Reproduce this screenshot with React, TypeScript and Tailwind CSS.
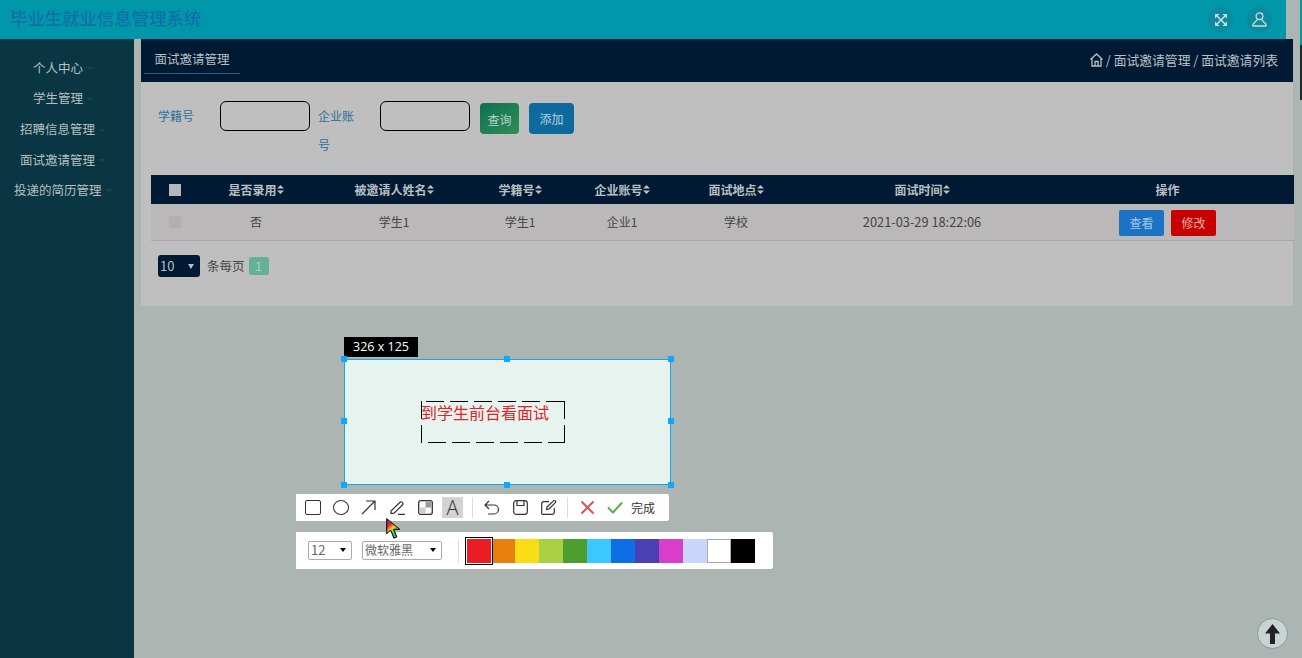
const font = "font-['Noto_Sans_CJK_SC','Liberation_Sans',sans-serif]";

const menu = [
  { label: "个人中心", pl: "pl-[33px]", h: "h-[30px]" },
  { label: "学生管理", pl: "pl-[33px]", h: "h-[31px]" },
  { label: "招聘信息管理", pl: "pl-[20px]", h: "h-[31px]" },
  { label: "面试邀请管理", pl: "pl-[20px]", h: "h-[30px]" },
  { label: "投递的简历管理", pl: "pl-[14px]", h: "h-[30px]" },
];

const columns = [
  { label: "是否录用", w: "w-[114px]" },
  { label: "被邀请人姓名", w: "w-[162px]" },
  { label: "学籍号", w: "w-[90px]" },
  { label: "企业账号", w: "w-[114px]" },
  { label: "面试地点", w: "w-[114px]" },
  { label: "面试时间", w: "w-[258px]" },
];

const swatches = ["bg-[#e8800e]", "bg-[#f8dc16]", "bg-[#a8d042]", "bg-[#4c9e2e]", "bg-[#3cc8fe]", "bg-[#0e6ee4]", "bg-[#4a3fb4]", "bg-[#d83fc8]", "bg-[#c8d6fc]"];

function SortIcon() {
  return (
    <svg width="7" height="9" viewBox="0 0 7 9" className="inline-block">
      <path d="M3.5 0 7 3.6H0zM3.5 9 0 5.4h7z" fill="currentColor" />
    </svg>
  );
}

function Handle({ className }: { className: string }) {
  return <span className={`absolute size-[6px] bg-[#10a8fa] ${className}`} />;
}

function Caret() {
  return <span className="ml-[3px] mt-[1px] border-x-[4px] border-t-[3px] border-x-transparent border-t-[#17434f]" />;
}

function ExpandIcon() {
  return (
    <svg width="12" height="12" viewBox="0 0 12 12" fill="#c8dde0" stroke="#c8dde0" strokeWidth="1.6">
      <path d="M2 2 10 10M10 2 2 10" />
      <path d="M0 0h4.5L0 4.5zM12 0H7.5L12 4.5zM0 12V7.500L4.500 12zM12 12H7.500L12 7.500z" stroke="none" />
    </svg>
  );
}

function UserIcon() {
  return (
    <svg width="15" height="15" viewBox="0 0 15 15" fill="none" stroke="#c8dde0" strokeWidth="1.3">
      <circle cx="7.5" cy="4.3" r="3.4" />
      <path d="M5.6 7.4 1 12.2V14h13v-1.8L9.4 7.4" />
    </svg>
  );
}

function DashedBox() {
  return (
    <svg width="144" height="42" viewBox="0 0 144 42" className="absolute left-[76px] top-[41px]" stroke="#000" strokeWidth="1" strokeDasharray="18 6">
      <path d="M0 .5H144" strokeDashoffset="19" />
      <path d="M0 41.5H144" strokeDashoffset="17" />
      <path d="M.5 0V42" />
      <path d="M143.500 0V42" />
    </svg>
  );
}

function ScreenshotTool() {
  return (
    <>
      <div className="absolute left-[344px] top-[337px] flex h-[20px] w-[74px] items-center justify-center bg-black text-[12.5px] text-white font-['Open_Sans',sans-serif]">
        326 x 125
      </div>

      <div className="absolute left-[344px] top-[359px] h-[126px] w-[327px] border border-[#10a8e8] bg-[#e6f3ee]">
        <Handle className="left-[-4px] top-[-4px]" />
        <Handle className="left-[159px] top-[-4px]" />
        <Handle className="right-[-4px] top-[-4px]" />
        <Handle className="left-[-4px] top-[58px]" />
        <Handle className="right-[-4px] top-[58px]" />
        <Handle className="bottom-[-4px] left-[-4px]" />
        <Handle className="bottom-[-4px] left-[159px]" />
        <Handle className="bottom-[-4px] right-[-4px]" />
        <DashedBox />
        <span className="absolute left-[76px] top-[41px] whitespace-nowrap text-[16px] leading-[22px] text-[#e0242c]">到学生前台看面试</span>
      </div>

      <div className="absolute left-[296px] top-[494px] flex h-[27px] w-[373px] items-center rounded-r-[2px] bg-white text-[#333]">
        <div className="ml-[9px] h-[15px] w-[16px] rounded-[2px] border-[1.5px] border-[#333]" />
        <div className="ml-[12px] h-[15px] w-[16px] rounded-[50%] border-[1.5px] border-[#333]" />
        <svg width="15" height="15" viewBox="0 0 15 15" fill="none" stroke="#333" strokeWidth="1.2" className="ml-[12px]">
          <path d="M1 14 14 1M5 1h9v9" />
        </svg>
        <svg width="15" height="15" viewBox="0 0 15 15" fill="none" stroke="#333" strokeWidth="1.2" className="ml-[14px]">
          <path d="M1 11 10 2.200a1.400 1.400 0 0 1 2 0l.6.6a1.400 1.400 0 0 1 0 2L3.800 13.400H1zM8 14.400h7" />
        </svg>
        <svg width="15" height="15" viewBox="0 0 15 15" className="ml-[13px]">
          <rect x="0.7" y="0.7" width="13.6" height="13.6" rx="2" fill="#fff" stroke="#333" strokeWidth="1.3" />
          <rect x="7.5" y="1.5" width="6" height="6" fill="#999" />
          <rect x="1.5" y="7.5" width="6" height="6" fill="#ccc" />
        </svg>
        <div className="ml-[9px] flex h-[21px] w-[21px] items-center justify-center bg-[#d3d3d3] text-[20px] font-light text-[#333] font-['Open_Sans',sans-serif]">A</div>
        <div className="ml-[9px] h-[21px] w-px bg-[#ddd]" />
        <svg width="16" height="15" viewBox="0 0 16 15" fill="none" stroke="#333" strokeWidth="1.2" className="ml-[11px]">
          <path d="M5 1 1 5l4 4M1 5h9a4.500 4.500 0 0 1 0 9H4" />
        </svg>
        <svg width="15" height="15" viewBox="0 0 15 15" fill="none" stroke="#333" strokeWidth="1.2" className="ml-[13px]">
          <rect x="0.7" y="0.7" width="13.6" height="13.6" rx="2.5" />
          <path d="M4 1v4.500h7V1" />
        </svg>
        <svg width="16" height="15" viewBox="0 0 16 15" fill="none" stroke="#333" strokeWidth="1.2" className="ml-[13px]">
          <path d="M8 1.700H2.500A1.800 1.800 0 0 0 .7 3.500v9.700A1.200 1.200 0 0 0 2 14.400h9.500a1.800 1.800 0 0 0 1.800-1.800V8" />
          <path d="M6 7 12.500 .9a1.200 1.200 0 0 1 1.800 1.700L8 9l-2.400.5z" />
        </svg>
        <div className="ml-[10px] h-[21px] w-px bg-[#ddd]" />
        <svg width="15" height="15" viewBox="0 0 15 15" fill="none" stroke="#d9534f" strokeWidth="2" className="ml-[12px]">
          <path d="M1.500 1.500 13.500 13.500M13.500 1.500 1.500 13.500" />
        </svg>
        <svg width="16" height="13" viewBox="0 0 16 13" fill="none" stroke="#5cad4a" strokeWidth="2" className="ml-[12px]">
          <path d="M1 6.500 6 11.500 15 1.500" />
        </svg>
        <span className="ml-[8px] text-[12px] text-[#333]">完成</span>
      </div>

      <div className="absolute left-[296px] top-[532px] flex h-[37px] w-[477px] items-center rounded-r-[2px] bg-white">
        <div className="ml-[12px] flex h-[19px] w-[44px] items-center justify-between rounded-[2px] border border-[#aaa] pb-[1px] pl-[2px] pr-[5px] text-[13px] text-[#666]">
          12
          <span className="border-x-[3.5px] border-t-[4px] border-x-transparent border-t-black" />
        </div>
        <div className="ml-[10px] flex h-[19px] w-[80px] items-center justify-between rounded-[2px] border border-[#aaa] pb-[1px] pl-[2px] pr-[5px] text-[12px] text-[#666]">
          微软雅黑
          <span className="border-x-[3.5px] border-t-[4px] border-x-transparent border-t-black" />
        </div>
        <div className="ml-[16px] h-[24px] w-px bg-[#ddd]" />
        <div className="relative z-10 ml-[6px] size-[28px] border border-black bg-white p-px">
          <div className="size-full bg-[#ec1c24]" />
        </div>
        <div className="ml-[-2px] flex">
          {swatches.map((c) => (
            <div key={c} className={`h-[24px] w-[24px] ${c}`} />
          ))}
          <div className="h-[24px] w-[24px] border border-[#aaa] bg-white" />
          <div className="h-[24px] w-[24px] bg-black" />
        </div>
      </div>

      <svg width="15" height="22" viewBox="0 0 15 22" className="absolute left-[386px] top-[518px]">
        <defs>
          <linearGradient id="cursorFill" x1="0.1" y1="0" x2="0.7" y2="1">
            <stop offset="0" stopColor="#a010b0" />
            <stop offset="0.3" stopColor="#e83020" />
            <stop offset="0.5" stopColor="#f0d020" />
            <stop offset="0.75" stopColor="#30c050" />
            <stop offset="1" stopColor="#20c0b0" />
          </linearGradient>
        </defs>
        <path d="M.7.7v15l4-3.500 3.200 8 3-1.300-3.200-7.600h6z" fill="url(#cursorFill)" stroke="#000" strokeWidth="1" />
      </svg>
    </>
  );
}

export default function App() {
  return (
    <div className={`relative flex h-[658px] w-[1302px] flex-col overflow-hidden bg-[#adb5b2] text-[12px] ${font}`}>
      <header className="flex h-[39px] w-[1286px] shrink-0 items-center justify-between bg-[#0097ab] pl-[10px] pr-[14px]">
        <span className="pb-[3px] text-[17.4px] font-medium text-[#1070a8]">毕业生就业信息管理系统</span>
        <div className="flex gap-[14px]">
          <div className="flex size-[25px] items-center justify-center rounded-full bg-[#0b8b9d]">
            <ExpandIcon />
          </div>
          <div className="flex size-[25px] items-center justify-center rounded-full bg-[#0b8b9d]">
            <UserIcon />
          </div>
        </div>
      </header>

      <div className="flex min-h-0 flex-1">
        <aside className="w-[134px] shrink-0 bg-[#0a3644] pt-[14px] text-[12.5px] text-[#b4c0c0]">
          {menu.map((m) => (
            <div key={m.label} className={`flex items-center ${m.h} ${m.pl}`}>
              {m.label}
              <Caret />
            </div>
          ))}
        </aside>

        <main className="ml-[7px] w-[1152px]">
          <section className="h-[267px] bg-[#bfbfbf]">
            <div className="flex h-[43px] items-center justify-between bg-[#001a33] pr-[15px]">
              <div className="ml-[3px] mb-[1px] flex h-[28px] w-[96px] items-center justify-center border-b border-[#185e8e] text-[12.5px] text-[#b8c0c4]">
                面试邀请管理
              </div>
              <div className="flex items-center gap-[3px] pb-[2px] text-[12.8px] text-[#b8c0c4]">
                <svg width="13" height="14" viewBox="0 0 13 14" fill="none" stroke="#b8c0c4" strokeWidth="1.3">
                  <path d="M.5 6.500 6.500 1l6 5.500M2 5.500V13h9V5.500M5 13V8.500h3V13" />
                </svg>
                <span>/ 面试邀请管理 / 面试邀请列表</span>
              </div>
            </div>

            <div className="flex h-[93px] items-start pl-[17px] pt-[19px] text-[12px] text-[#2f6f9a]">
              <span className="mt-[6px] w-[62px]">学籍号</span>
              <div className="h-[30px] w-[90px] rounded-[6px] border border-black" />
              <div className="ml-[8px] w-[36px] leading-[29px]">
                <span>企业账</span>
                <span className="block">号</span>
              </div>
              <div className="ml-[26px] h-[30px] w-[90px] rounded-[6px] border border-black" />
              <button className="ml-[10px] mt-[2px] h-[31px] w-[39px] rounded-[4px] bg-gradient-to-br from-[#0c7050] to-[#2e8e58] pt-[2px] text-[12px] text-[#b8d0c8]">查询</button>
              <button className="ml-[10px] mt-[2px] h-[31px] w-[45px] rounded-[4px] bg-[#0e6a9c] text-[12px] text-[#b8d0dc]">添加</button>
            </div>

            <div className="ml-[10px] w-[1143px]">
              <div className="flex h-[29px] items-center bg-[#001a33] text-[12px] font-bold text-[#b8c0c4]">
                <div className="flex w-[48px] justify-center">
                  <div className="size-[12px] bg-[#b4b8bc]" />
                </div>
                {columns.map((c) => (
                  <div key={c.label} className={`flex items-center justify-center ${c.w}`}>
                    {c.label}
                    <SortIcon />
                  </div>
                ))}
                <div className="flex-1 pr-[10px] text-center">操作</div>
              </div>
              <div className="flex h-[37px] items-center border-b border-[#a8a8a8] bg-[#bab8b9] text-[12px] text-[#444]">
                <div className="flex w-[48px] justify-center">
                  <div className="size-[12px] bg-[#b0b0b0]" />
                </div>
                {["否", "学生1", "学生1", "企业1", "学校"].map((v, i) => (
                  <div key={i} className={`text-center ${columns[i].w}`}>{v}</div>
                ))}
                <div className={`text-center text-[12.8px] ${columns[5].w}`}>2021-03-29 18:22:06</div>
                <div className="flex flex-1 items-center justify-center gap-[7px] pr-[10px] pt-[1px]">
                  <button className="h-[26px] w-[45px] rounded-[2px] bg-[#1c72c4] text-[12px] text-[#a8c8e4]">查看</button>
                  <button className="h-[26px] w-[45px] rounded-[2px] bg-[#c80000] text-[12px] text-[#e4b0a8]">修改</button>
                </div>
              </div>
            </div>

            <div className="ml-[17px] mt-[14px] flex items-center text-[12.5px] text-[#444]">
              <div className="flex h-[22px] w-[42px] items-center justify-between rounded-[3px] bg-[#001a33] pl-[2px] pr-[6px] text-[13px] text-[#b8c0c4]">
                10
                <span className="border-x-[3px] border-t-[5px] border-x-transparent border-t-[#b8c0c4]" />
              </div>
              <span className="ml-[7px]">条每页</span>
              <span className="ml-[4px] flex h-[18px] w-[20px] items-center justify-center rounded-[2px] bg-[#66b096] text-[#a8d4c4]">1</span>
            </div>
          </section>
        </main>
      </div>

      <ScreenshotTool />

      <div className="absolute right-0 top-0 h-[100px] w-[2px] bg-[#1a2a30]">
        <div className="h-[45px] bg-[#0097ab]" />
      </div>

      <div className="absolute left-[1257px] top-[618px] flex size-[31px] items-center justify-center rounded-full border border-[#8a9a9c] bg-[#c8d4d4]">
        <svg width="15" height="20" viewBox="0 0 15 20">
          <path d="M7.500 0 15 9.500H10V20H5V9.500H0z" fill="#222" />
        </svg>
      </div>
    </div>
  );
}
